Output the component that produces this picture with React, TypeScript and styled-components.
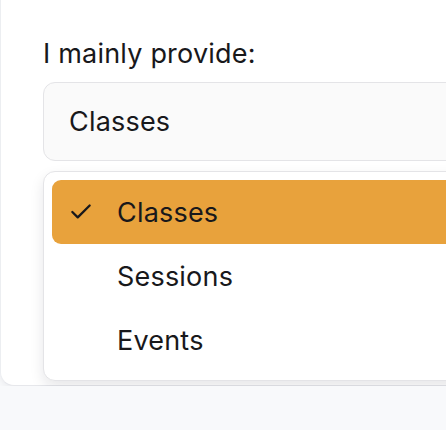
import React from "react";
import styled, { createGlobalStyle } from "styled-components";

const Global = createGlobalStyle`
  html, body { margin: 0; padding: 0; background: #f8f9fb; overflow: hidden; }
  body { font-family: Inter, "Noto Sans", sans-serif; color: #18181b; }
  * { box-sizing: border-box; }
`;

const Card = styled.div`
  background: #ffffff;
  width: 520px;
  height: 386px;
  border-bottom: 1px solid #e6e7eb;
  border-left: 1px solid #eceef1;
  border-radius: 0 0 0 14px;
  box-shadow: 0 2px 6px rgba(15, 23, 42, 0.06);
  padding: 36px 0 0 42px;
`;

const Label = styled.div`
  font-size: 27px;
  line-height: 36px;
  font-weight: 400;
  letter-spacing: 0.2px;
  margin-bottom: 10px;
`;

const Trigger = styled.div`
  width: 520px;
  height: 79px;
  background: #fafafa;
  border: 1.5px solid #e4e4e7;
  border-radius: 12px;
  display: flex;
  align-items: center;
  padding-left: 25px;
  font-size: 27px;
  letter-spacing: 0.2px;
`;

const Menu = styled.div`
  margin-top: 10px;
  width: 520px;
  background: #ffffff;
  border: 1.5px solid #e4e4e7;
  border-radius: 12px;
  padding: 8px;
  box-shadow: 0 6px 14px rgba(15, 23, 42, 0.1);
`;

const Item = styled.div<{ $active?: boolean }>`
  height: 64px;
  display: flex;
  align-items: center;
  padding-left: 16px;
  border-radius: 9px;
  background: ${(p) => (p.$active ? "#e8a23c" : "transparent")};
  font-size: 27px;
  letter-spacing: 0.2px;
  color: #18181b;
`;

const Check = styled.span`
  width: 26px;
  height: 26px;
  display: inline-flex;
  margin-right: 23px;
`;

const options = ["Classes", "Sessions", "Events"];

export default function App() {
  return (
    <>
      <Global />
      <Card>
        <Label>I mainly provide:</Label>
        <Trigger>Classes</Trigger>
        <Menu>
          {options.map((o, i) => (
            <Item key={o} $active={i === 0}>
              <Check>
                {i === 0 && (
                  <svg width="26" height="26" viewBox="0 0 24 24" fill="none" stroke="#18181b" strokeWidth="2.1" strokeLinecap="round" strokeLinejoin="round">
                    <path d="M20 6 9 17l-5-5" />
                  </svg>
                )}
              </Check>
              {o}
            </Item>
          ))}
        </Menu>
      </Card>
    </>
  );
}
